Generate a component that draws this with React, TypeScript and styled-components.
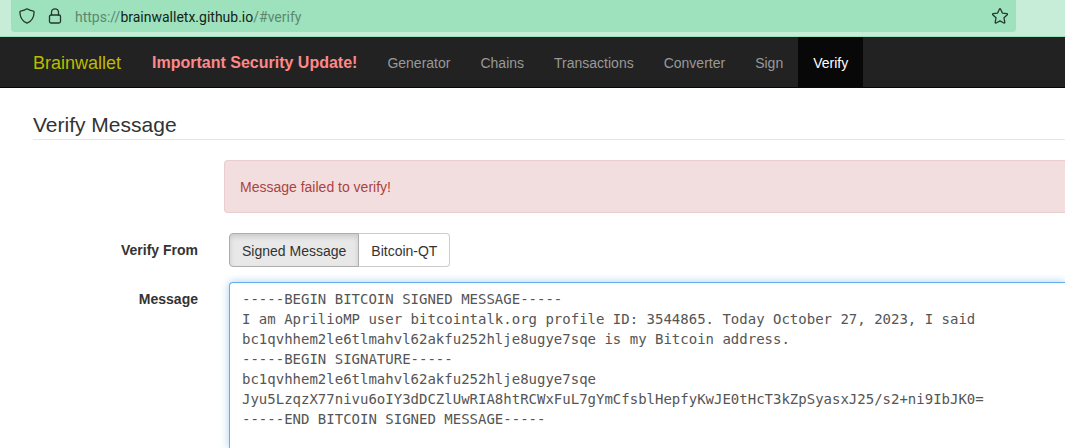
import React, { useState } from 'react';
import styled, { createGlobalStyle } from 'styled-components';

const GlobalStyle = createGlobalStyle`
  * { box-sizing: border-box; }
  body {
    margin: 0;
    background: #fff;
    color: #333;
    font: 14px/20px "Liberation Sans", Arial, sans-serif;
  }
`;

const Page = styled.div`
  display: flex;
  flex-direction: column;
  min-height: 100vh;
`;

const BrowserBar = styled.div`
  display: flex;
  height: 37px;
  padding: 0 49px 4px 11px;
  background: #c7ecd7;
  border-bottom: 1px solid #9de1bc;
`;

const AddressBar = styled.div`
  display: flex;
  flex: 1;
  align-items: center;
  padding: 0 8px;
  border-radius: 0 0 4px 4px;
  background: #9de2bc;
  color: #1c2b23;
`;

const Glyph = styled.svg`
  flex: none;
  width: 16px;
  height: 16px;
  margin-right: 12px;
  fill: none;
  stroke: #24382d;
  stroke-width: 1.3;
  stroke-linejoin: round;
  stroke-linecap: round;
`;

const StarButton = styled.button`
  display: flex;
  margin-left: auto;
  padding: 0;
  border: 0;
  background: none;

  ${Glyph} { margin: 0; }
`;

const Url = styled.span`
  padding-top: 2px;
  font: 14px/20px Roboto, sans-serif;
  color: #141f19;
`;

const Muted = styled.span`
  color: #5c8870;
`;

const Nav = styled.nav`
  display: flex;
  height: 51px;
  padding-left: 18px;
  background: #222;
  border-bottom: 1px solid #080808;
`;

const NavLink = styled.a<{ $active?: boolean }>`
  padding: 16px 15px 14px;
  color: ${(p) => (p.$active ? '#fff' : '#999')};
  background: ${(p) => (p.$active ? '#080808' : 'transparent')};
  text-decoration: none;
  white-space: nowrap;
`;

const Brand = styled(NavLink)`
  padding-right: 16px;
  font-size: 18px;
  color: #bbbb00;
`;

const Notice = styled(NavLink)`
  font-size: 16px;
  font-weight: bold;
  color: #ff8888;
`;

const Main = styled.main`
  display: flex;
  flex: 1;
  flex-direction: column;
  padding: 26px 0 0 33px;
`;

const Title = styled.h1`
  margin: 0 0 20px;
  padding-bottom: 3px;
  border-bottom: 1px solid #e5e5e5;
  font-size: 21px;
  line-height: 22px;
  font-weight: normal;
`;

const Alert = styled.div`
  margin: 0 0 20px 191px;
  padding: 16px 15px 15px;
  border: 1px solid #ebccd1;
  border-right: 0;
  border-radius: 4px 0 0 4px;
  background: #f2dede;
  color: #a94442;
`;

const Form = styled.form`
  display: grid;
  flex: 1;
  grid-template-columns: 165px 1fr;
  grid-template-rows: auto 1fr;
  gap: 15px 31px;
`;

const Label = styled.label`
  padding-top: 7px;
  font-weight: bold;
  text-align: right;
`;

const ButtonGroup = styled.div`
  display: flex;
`;

const Toggle = styled.button<{ $active: boolean }>`
  height: 34px;
  padding: 2px 12px 0;
  border: 1px solid ${(p) => (p.$active ? '#adadad' : '#ccc')};
  background: ${(p) => (p.$active ? '#e8e8e8' : '#fff')};
  box-shadow: ${(p) => (p.$active ? 'inset 0 3px 5px rgba(0, 0, 0, 0.125)' : 'none')};
  color: #333;
  font: inherit;

  &:first-child { border-radius: 4px 0 0 4px; }
  &:last-child { border-left: 0; border-radius: 0 4px 4px 0; }
`;

const MessageBox = styled.textarea`
  display: block;
  width: 100%;
  height: 100%;
  padding: 6px 12px;
  border: 1px solid #66afe9;
  border-width: 1px 0 0 1px;
  border-radius: 4px 0 0 0;
  outline: 0;
  box-shadow: inset 0 1px 1px rgba(0, 0, 0, 0.04), 0 0 8px rgba(102, 175, 233, 0.6);
  color: #555;
  font: 14px/20px "DejaVu Sans Mono", monospace;
  resize: none;
`;

const links = ['Generator', 'Chains', 'Transactions', 'Converter', 'Sign', 'Verify'];

const signedMessage = `-----BEGIN BITCOIN SIGNED MESSAGE-----
I am AprilioMP user bitcointalk.org profile ID: 3544865. Today October 27, 2023, I said
bc1qvhhem2le6tlmahvl62akfu252hlje8ugye7sqe is my Bitcoin address.
-----BEGIN SIGNATURE-----
bc1qvhhem2le6tlmahvl62akfu252hlje8ugye7sqe
Jyu5LzqzX77nivu6oIY3dDCZlUwRIA8htRCWxFuL7gYmCfsblHepfyKwJE0tHcT3kZpSyasxJ25/s2+ni9IbJK0=
-----END BITCOIN SIGNED MESSAGE-----`;

export default function App() {
  const [source, setSource] = useState('Signed Message');
  const [message, setMessage] = useState(signedMessage);

  return (
    <Page>
      <GlobalStyle />
      <BrowserBar>
        <AddressBar>
          <Glyph viewBox="0 0 16 16" aria-hidden="true">
            <path d="M8 .8C6.2 2 3.8 2.7 1.6 3.1 1 3.2.9 3.5.9 4c.1 5 2.2 9.200 7.100 11.200C12.900 13.200 15 9 15.100 4c0-.5-.1-.8-.7-.9C12.200 2.700 9.800 2 8 .8Z" />
          </Glyph>
          <Glyph viewBox="0 0 16 16" aria-hidden="true">
            <rect x="2.500" y="7" width="11" height="8" rx="1.500" />
            <path d="M4.500 7V4.300a3.500 3.500 0 0 1 7 0V7" />
          </Glyph>
          <Url>
            <Muted>https://</Muted>brainwalletx.github.io<Muted>/#verify</Muted>
          </Url>
          <StarButton type="button" aria-label="Bookmark this page">
            <Glyph viewBox="0 0 16 16" aria-hidden="true">
              <path d="M7.400 1.200 5.600 5.100 1.100 5.700c-.6.1-.7.6-.4 1L4 9.800l-.8 4.600c-.1.6.4.9.9.6L8 12.900l3.900 2.100c.5.3 1 0 .9-.6L12 9.800l3.300-3.100c.3-.4.2-.9-.4-1l-4.500-.6L8.600 1.200c-.3-.6-.9-.6-1.200 0Z" />
            </Glyph>
          </StarButton>
        </AddressBar>
      </BrowserBar>
      <Nav>
        <Brand href="#">Brainwallet</Brand>
        <Notice href="#update">Important Security Update!</Notice>
        {links.map((name) => (
          <NavLink key={name} href={`#${name.toLowerCase()}`} $active={name === 'Verify'}>
            {name}
          </NavLink>
        ))}
      </Nav>
      <Main>
        <Title>Verify Message</Title>
        <Alert role="alert">Message failed to verify!</Alert>
        <Form>
          <Label as="span" id="source-label">Verify From</Label>
          <ButtonGroup role="group" aria-labelledby="source-label">
            {['Signed Message', 'Bitcoin-QT'].map((name) => (
              <Toggle
                key={name}
                type="button"
                $active={source === name}
                aria-pressed={source === name}
                onClick={() => setSource(name)}
              >
                {name}
              </Toggle>
            ))}
          </ButtonGroup>
          <Label htmlFor="message">Message</Label>
          <MessageBox
            id="message"
            rows={7}
            spellCheck={false}
            value={message}
            onChange={(e) => setMessage(e.target.value)}
          />
        </Form>
      </Main>
    </Page>
  );
}
